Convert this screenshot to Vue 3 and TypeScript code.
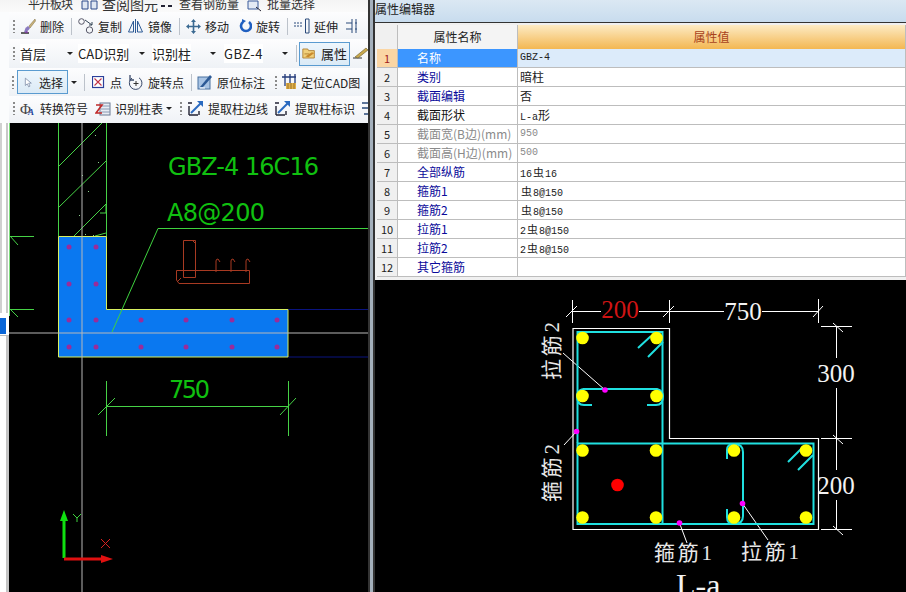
<script setup lang="ts">
interface Row {
  no: number
  name: string
  value: string
  kind: 'blue' | 'black' | 'grey'
}
const rows: Row[] = [
  { no: 1, name: '名称', value: 'GBZ-4', kind: 'blue' },
  { no: 2, name: '类别', value: '暗柱', kind: 'blue' },
  { no: 3, name: '截面编辑', value: '否', kind: 'blue' },
  { no: 4, name: '截面形状', value: 'L-a形', kind: 'black' },
  { no: 5, name: '截面宽(B边)(mm)', value: '950', kind: 'grey' },
  { no: 6, name: '截面高(H边)(mm)', value: '500', kind: 'grey' },
  { no: 7, name: '全部纵筋', value: '16虫16', kind: 'blue' },
  { no: 8, name: '箍筋1', value: '虫8@150', kind: 'blue' },
  { no: 9, name: '箍筋2', value: '虫8@150', kind: 'blue' },
  { no: 10, name: '拉筋1', value: '2虫8@150', kind: 'blue' },
  { no: 11, name: '拉筋2', value: '2虫8@150', kind: 'blue' },
  { no: 12, name: '其它箍筋', value: '', kind: 'blue' },
]
function parts(v: string): string[] {
  return v.split(/([\u4e00-\u9fff]+)/).filter((p) => p.length > 0)
}
function isCjk(p: string): boolean {
  return /[\u4e00-\u9fff]/.test(p)
}
const dotsX = [69, 96]
const dotsY = [247, 284, 320, 347]
const dotsX2 = [141, 186, 232, 277]
const bars: [number, number][] = [
  [582.5, 338], [656.5, 338], [582.5, 396], [656.5, 396],
  [582.5, 450.5], [656, 450.5], [582.5, 517.5], [656, 517.5],
  [734, 450.5], [806, 450.5], [734, 517.5], [806, 517.5],
]
const pins: [number, number][] = [[605, 390], [576.5, 431.5], [679.5, 523], [742.5, 503.5]]
const hatch = [
  'M58 167L102 123', 'M58 208L106 161', 'M74 236L106 204',
  'M100 213L106 213L106 204', 'M95 236L106 233',
]
const specks: [number, number][] = [[95, 135], [98, 162], [82, 175], [88, 191], [79, 215], [85, 234], [93, 235]]
</script>

<template>
  <div class="app">
    <section class="left">
      <div class="strip-top">
        <span class="ghost g1">平开板块</span>
        <svg class="ghost-ic" width="19" height="12" viewBox="0 0 19 12"><path d="M1 1H7V9H1ZM10 1H16V9H10Z" fill="#dfe7f2" stroke="#2d4a8a"/></svg>
        <span class="ghost g2">查阅图元</span>
        <svg class="ghost-ic" width="14" height="12" viewBox="0 0 14 12"><path d="M1 6H5M8 6H12" stroke="#223" stroke-width="2"/></svg>
        <span class="ghost g3">查看钢筋量</span>
        <svg class="ghost-ic" width="15" height="12" viewBox="0 0 15 12"><path d="M1 1H11V9H1Z" fill="#e4eaf4" stroke="#3a5a9a"/><path d="M9 7L14 11" stroke="#223"/></svg>
        <span class="ghost g4">批量选择</span>
      </div>

      <div class="tb tb-a">
        <i class="handle"></i>
        <div class="tool">
          <svg width="16" height="16" viewBox="0 0 16 16"><path d="M1 15H9" stroke="#222" stroke-width="1.4"/><path d="M5 15L8 15L6 9Z" fill="#7a3a9a"/><path d="M4 14C5 11 6 9 8 8L10 10C9 12 7 14 4 14Z" fill="#8a7ac0"/><path d="M9 8L15 1L15.5 3L10 10Z" fill="#c9b27a" stroke="#7b6a3f" stroke-width=".5"/></svg>
          <span>删除</span>
        </div>
        <i class="sep"></i>
        <div class="tool">
          <svg width="16" height="16" viewBox="0 0 16 16" fill="none" stroke="#556"><circle cx="3.5" cy="3.5" r="2.8"/><circle cx="11.5" cy="12" r="3.2"/><path d="M7 2L14 7M14 4V7H11" stroke="#345"/></svg>
          <span>复制</span>
        </div>
        <div class="tool t-mirror">
          <svg width="17" height="16" viewBox="0 0 17 16" fill="none" stroke="#2d5a96"><path d="M8.5 1V15"/><path d="M6.5 3V14H1.5Z"/><path d="M10.5 3V14H15.5Z"/></svg>
          <span>镜像</span>
        </div>
        <i class="sep"></i>
        <div class="tool">
          <svg width="15" height="15" viewBox="0 0 15 15" fill="#3b6a92"><path d="M7.5 0L10 3H8.3V6.7H12V5L15 7.5L12 10V8.3H8.3V12H10L7.5 15L5 12H6.7V8.3H3V10L0 7.5L3 5V6.7H6.7V3H5Z"/></svg>
          <span>移动</span>
        </div>
        <div class="tool t-rot">
          <svg width="13" height="14" viewBox="0 0 13 14" fill="none"><path d="M4 3A5 5 0 1 0 10 3" stroke="#1f5fc0" stroke-width="2.6"/><path d="M3 0V5L7 2Z" fill="#1f5fc0"/></svg>
          <span>旋转</span>
        </div>
        <i class="sep"></i>
        <div class="tool">
          <svg width="16" height="16" viewBox="0 0 16 16" fill="none" stroke="#2a4a7a"><path d="M0 8H9" stroke-dasharray="2 1"/><path d="M0 5H9" stroke-dasharray="2 1"/><path d="M11.5 1V15H15V1Z"/></svg>
          <span>延伸</span>
        </div>
        <div class="tool">
          <svg width="16" height="16" viewBox="0 0 16 16" fill="none" stroke="#2a4a7a"><path d="M0 5H6M0 11H6M6 1V15M9 5H11M9 11H11M10 1V15" /></svg>
        </div>
        <svg class="clip-ic" width="8" height="16" viewBox="0 0 8 16"><path d="M2 2H8V14H2Z" fill="#8a7a4a"/></svg>
      </div>

      <div class="tb tb-b">
        <i class="handle"></i>
        <div class="field f1"><span>首层</span><i class="caret"></i></div>
        <div class="field f2"><span>CAD识别</span><i class="caret"></i></div>
        <div class="field f3"><span>识别柱</span><i class="caret"></i></div>
        <div class="field f4"><span>GBZ-4</span><i class="caret"></i></div>
        <i class="sep s-b"></i>
        <div class="tool active a-prop">
          <svg width="17" height="15" viewBox="0 0 17 15"><path d="M1 2H7L8 4H15V13H1Z" fill="#f0cf7a" stroke="#a9782a"/><path d="M4 11L12 6L15 7L8 12Z" fill="#c98a2c"/><path d="M3 8H9" stroke="#a9782a"/></svg>
          <span>属性</span>
        </div>
        <svg class="clip-ic" width="16" height="15" viewBox="0 0 16 15" fill="none"><path d="M1 12H10" stroke="#333"/><path d="M3 11L14 2L16 4L6 12Z" fill="#c9a94e" stroke="#6a5a2a" stroke-width=".6"/></svg>
      </div>

      <div class="tb tb-c">
        <i class="handle hc"></i>
        <div class="tool active a-sel">
          <svg width="12" height="15" viewBox="0 0 12 15"><path d="M2 1V12L5 9.5L7 14L9 13L7 8.5H11Z" fill="#fff" stroke="#6a7a9a"/></svg>
          <span>选择</span>
        </div>
        <i class="caret c-sel"></i>
        <i class="sep s-sel"></i>
        <div class="tool t-pt">
          <svg width="13" height="13" viewBox="0 0 13 13" fill="#fff"><rect x=".5" y=".5" width="11" height="11" stroke="#2b3f9a" stroke-width="1.2"/><path d="M2.5 2.5L9.5 9.5M9.5 2.5L2.5 9.5" stroke="#c0354a" stroke-width="1.1"/></svg>
          <span>点</span>
        </div>
        <div class="tool t-rp">
          <svg width="16" height="16" viewBox="0 0 16 16" fill="none" stroke="#3a4a6a"><path d="M4 4A6.3 6.3 0 1 0 11 3.8"/><path d="M2 1V6H6" stroke-width="1.3"/><path d="M8 7V12M5.5 9.500H10.500" stroke="#333"/></svg>
          <span>旋转点</span>
        </div>
        <i class="sep s-rp"></i>
        <div class="tool">
          <svg width="16" height="16" viewBox="0 0 16 16"><rect x="1" y="3" width="12" height="12" fill="#a9c4e4" stroke="#48719f"/><path d="M3 13L13 1L15 3L6 13Z" fill="#2d5a96"/><path d="M3 14H8" stroke="#fff"/></svg>
          <span>原位标注</span>
        </div>
        <i class="handle hc2"></i>
        <div class="tool t-loc">
          <svg width="15" height="16" viewBox="0 0 15 16" fill="none"><path d="M0 3H14M3 0V12M8 0V12M13 0V12" stroke="#223a7a" stroke-width="1.3"/><path d="M4 9H14V15H4Z" fill="#e2b04a"/><path d="M6 9V15M9 9V15M12 9V15" stroke="#9a7428"/></svg>
          <span>定位CAD图</span>
        </div>
      </div>

      <div class="tb tb-d">
        <i class="handle"></i>
        <div class="tool t-phi">
          <span class="phi-ic" aria-hidden="true">Φ<b>A</b></span>
          <span>转换符号</span>
        </div>
        <div class="tool t-tab">
          <svg width="16" height="14" viewBox="0 0 16 14"><rect x="5" y="1" width="10" height="12" fill="#e8edf4" stroke="#6a7a94"/><path d="M6 4H15M6 7H15M6 10H15" stroke="#8a9ab4"/><path d="M1 3H7L1 11H7" fill="none" stroke="#c02a2a" stroke-width="1.6"/></svg>
          <span>识别柱表</span>
        </div>
        <i class="caret c-tab"></i>
        <i class="handle hd"></i>
        <div class="tool">
          <svg width="17" height="17" viewBox="0 0 17 17" fill="none"><path d="M2 15V6M2 15H11" stroke="#223" stroke-width="1.4"/><path d="M4 13L15 2" stroke="#2a6ac0" stroke-width="2"/><path d="M10 1H16V7Z" fill="#2a6ac0"/><path d="M1 3H5M12 15V11" stroke="#223" stroke-width="1.4"/></svg>
          <span>提取柱边线</span>
        </div>
        <div class="tool t-last">
          <svg width="17" height="17" viewBox="0 0 17 17" fill="none"><path d="M2 15V6M2 15H11" stroke="#223" stroke-width="1.4"/><path d="M4 13L15 2" stroke="#2a6ac0" stroke-width="2"/><path d="M10 1H16V7Z" fill="#2a6ac0"/><path d="M1 3H5M12 15V11" stroke="#223" stroke-width="1.4"/></svg>
          <span>提取柱标识</span>
        </div>
        <svg class="clip-ic" width="7" height="17" viewBox="0 0 7 17" fill="none"><path d="M1 3H7M1 8H7M3 14H7" stroke="#2a4a7a" stroke-width="1.4"/></svg>
      </div>

      <div class="work">
        <div class="gutter">
          <div class="gut-a"></div>
          <div class="gut-b"></div>
          <div class="gut-c"></div>
        </div>
        <svg class="canvas" viewBox="9 123 359 469" width="359" height="469">
          <path d="M58.500 123V236.500M106.500 123V236.500" stroke="#46d246" fill="none"/>
          <path v-for="h in hatch" :key="h" :d="h" stroke="#46d246" fill="none"/>
          <rect v-for="s in specks" :key="s[0] + '-' + s[1]" :x="s[0]" :y="s[1]" width="1" height="1" fill="#8fd08f"/>

          <path d="M9.500 123V316" stroke="#7fe07f"/>
          <path d="M10 236.500H34M10 309.500H34M10 236L18 245M10 309L18 317" stroke="#46d246" fill="none"/>

          <path d="M288 309.500H368M288 357H368" stroke="#0a1480"/>

          <path d="M58.500 236.500H106.500V309.500H288V357H58.500Z" fill="#0a78f0" stroke="#d8f060"/>

          <path d="M82 123V592" stroke="#b8b8b8"/>
          <path d="M9 333H368" stroke="#b8b8b8"/>

          <g fill="#9a2c9a">
            <template v-for="x in dotsX" :key="x">
              <circle v-for="y in dotsY" :key="y" :cx="x" :cy="y" r="2.500"/>
            </template>
            <template v-for="x in dotsX2" :key="x">
              <circle :cx="x" cy="320" r="2.500"/>
              <circle :cx="x" cy="347" r="2.500"/>
            </template>
          </g>

          <path d="M368 228.500H158L112 332" stroke="#3fd23f" fill="none"/>
          <text class="gtxt" x="168" y="175" textLength="151">GBZ-4 16C16</text>
          <text class="gtxt" x="167" y="221" textLength="98">A8@200</text>

          <g fill="none" stroke="#a83a22">
            <path d="M183.500 240.500H195.500V277.500H183.500Z"/>
            <path d="M176.500 270.500H249.500V283.500H179L176.500 280Z"/>
            <path d="M216 272V261Q216 259 218 259L220 262M231 272V261Q231 259 233 259L235 262M246 272V261Q246 259 248 259L250 262"/>
            <path d="M193 241L195 243M177 282L181 278"/>
          </g>

          <path d="M106.500 381V436M288.500 381V436M106.500 406.500H288.500M98 415L115 398M280 415L296 398" stroke="#46d246" fill="none"/>
          <text class="gtxt" x="169" y="398" textLength="41">750</text>

          <path d="M64 558V516" stroke="#10e010" stroke-width="3"/>
          <path d="M64 510L68 521H60Z" fill="#10e010"/>
          <path d="M64 559H104" stroke="#e01010" stroke-width="3"/>
          <path d="M113 559L101 555V563Z" fill="#e01010"/>
          <path d="M73 514L77 518L81 514M77 518V522" stroke="#3fd23f" fill="none"/>
          <path d="M101 539L110 548M110 539L101 548" stroke="#d82020" fill="none"/>
        </svg>
      </div>
    </section>

    <div class="divider"></div>

    <section class="right">
      <header class="title">属性编辑器</header>
      <div class="grid-wrap">
        <div class="grid">
          <div class="row head">
            <div class="c-no"></div>
            <div class="c-name head-name">属性名称</div>
            <div class="c-val head-val">属性值</div>
          </div>
          <div v-for="r in rows" :key="r.no" class="row" :class="{ sel: r.no === 1 }">
            <div class="c-no">{{ r.no }}</div>
            <div class="c-name" :class="r.kind">{{ r.name }}</div>
            <div class="c-val" :class="{ muted: r.kind === 'grey' }"><template v-for="(p, i) in parts(r.value)" :key="i"><span v-if="isCjk(p)" :class="p === '虫' ? 'bar' : 'cjk'">{{ p }}</span><template v-else>{{ p }}</template></template></div>
          </div>
        </div>
      </div>
      <svg class="drawing" viewBox="375 280 531 312" width="531" height="312">
        <g fill="none" stroke="#fff" stroke-width="1">
          <path d="M573 328.500H669.500V438.500H818.500V529.500H573Z" stroke-width="1.200"/>
          <path d="M572.500 300V323M669.500 300V323M818.500 299V323"/>
          <path d="M572.500 311.500H601M639 311.500H669.500M669.500 311.500H724M762 311.500H818.500"/>
          <path d="M566 317L577 306M663 317L674 306M813 317L823 306"/>
          <path d="M836.500 326.500V358M836.500 388V470M836.500 500V529.500"/>
          <path d="M821 326.500H852M821 438.500H852M821 529.500H852"/>
          <path d="M833 323L843 332M833 435L843 444M833 526L843 535"/>
          <path d="M563 353L605 390M564 445L576.500 431.500M679.500 523L687 543M742.500 503.500L768 540"/>
        </g>

        <g fill="none" stroke="#20e0e0" stroke-width="2">
          <path d="M577.500 443V332H662.500V443"/>
          <path d="M577.500 443.500H813.500V524H577.500Z"/>
          <path d="M662.500 443V524"/>
          <path d="M583 389H657Q663 391 663 396Q663 405 656 405H647"/>
          <path d="M583 389Q577 391 577 396Q577 405 584 405H592"/>
          <path d="M743 452V516"/>
          <path d="M727 459V450Q727 444 734 444Q743 444 743 452"/>
          <path d="M727 509V517Q727 524 734 524Q743 524 743 516"/>
          <path d="M638 348L651 336M648 357L663 342M788 462L803 447M798 470L813 455"/>
        </g>

        <circle v-for="b in bars" :key="b[0] + '-' + b[1]" :cx="b[0]" :cy="b[1]" r="6.300" fill="#ffff00"/>
        <circle cx="617.500" cy="485" r="6.300" fill="#ff0000"/>
        <circle v-for="p in pins" :key="p[0]" :cx="p[0]" :cy="p[1]" r="2.800" fill="#ff00ff"/>

        <text class="dim red" x="620" y="318" text-anchor="middle">200</text>
        <text class="dim" x="743" y="320" text-anchor="middle">750</text>
        <text class="dim" x="836" y="382" text-anchor="middle">300</text>
        <text class="dim" x="836" y="494" text-anchor="middle">200</text>
        <text class="lab" transform="translate(559 380) rotate(-90)" textLength="58">拉筋2</text>
        <text class="lab" transform="translate(559 502) rotate(-90)" textLength="58">箍筋2</text>
        <text class="lab" x="654" y="560" textLength="58">箍筋1</text>
        <text class="lab" x="741" y="559" textLength="58">拉筋1</text>
        <text class="la" x="676" y="596">L-a</text>
      </svg>
    </section>
  </div>
</template>

<style scoped>
.app {
  display: grid;
  grid-template-columns: 368px 7px 531px;
  width: 906px;
  height: 592px;
  overflow: hidden;
  font-family: "Noto Sans CJK SC", "Liberation Sans", sans-serif;
  font-size: 12px;
  color: #222;
  background: #fff;
}
.left {
  display: flex;
  flex-direction: column;
  min-width: 0;
  overflow: hidden;
  background: #fbfcfd;
}
.strip-top {
  height: 12px;
  flex: none;
  display: flex;
  align-items: flex-end;
  overflow: hidden;
  white-space: nowrap;
  background: linear-gradient(#f4f4f4, #fafafa);
}
.ghost {
  flex: none;
  font-size: 12px;
  line-height: 12px;
  margin-bottom: 2px;
  color: #333;
}
.ghost-ic { flex: none; }
.g1 { margin-left: 28px; margin-right: 8px; width: 45px; letter-spacing: -1px; }
.g2 { margin-left: 2px; font-size: 14px; width: 58px; }
.g3 { margin-left: 5px; margin-right: 8px; }
.g4 { margin-left: 5px; }
.tb {
  display: flex;
  align-items: center;
  flex: none;
  white-space: nowrap;
  background: linear-gradient(#fdfdfe, #eff2f6);
  overflow: hidden;
  margin-left: 9px;
  box-sizing: border-box;
}
.tb-a { height: 27px; padding-top: 1px; }
.tb-b { height: 29px; }
.tb-c { height: 28px; }
.tb-d { height: 27px; padding-bottom: 2px; }
.handle {
  flex: none;
  width: 2px;
  height: 13px;
  margin: 0 1px 0 4px;
  background: repeating-linear-gradient(#8a8a8a 0 2px, transparent 2px 4px);
}
.tool {
  display: flex;
  align-items: center;
  flex: none;
  gap: 4px;
  padding: 0 4px;
}
.t-mirror { margin-left: -3px; }
.t-rot { margin-left: 2px; }
.sep {
  flex: none;
  width: 1px;
  height: 17px;
  margin: 0 2px 0 3px;
  background: #bcc2ca;
}
.caret {
  flex: none;
  width: 0;
  height: 0;
  border-left: 3px solid transparent;
  border-right: 3px solid transparent;
  border-top: 3px solid #222;
}
.field {
  display: flex;
  align-items: center;
  justify-content: space-between;
  flex: none;
  height: 24px;
  box-sizing: border-box;
  font-size: 13px;
}
.f1 { width: 57px; padding-left: 4px; margin-right: 4px; }
.f2 { width: 68px; padding-left: 1px; }
.f3 { width: 71px; padding-left: 7px; }
.f4 { width: 72px; padding-left: 8px; letter-spacing: .5px; }
.s-b { margin-left: 8px; margin-right: 2px; }
.field span { background: #fff; }
.active {
  height: 24px;
  box-sizing: border-box;
  border: 1px solid #5a9bd0;
  background: linear-gradient(#eef6fc, #dbeaf6);
}
.a-prop { width: 51px; padding: 0 2px; font-size: 13px; gap: 5px; }
.a-sel { width: 51px; margin-left: 3px; padding-left: 6px; gap: 7px; }
.clip-ic { flex: none; margin-left: 2px; }
.c-sel { margin-left: 3px; }
.s-sel { margin-left: 7px; margin-right: 3px; }
.t-pt { gap: 5px; }
.t-rp { margin-left: -2px; }
.s-rp { margin-right: 1px; }
.hc { margin-left: 3px; margin-right: 0; }
.hc2 { margin-left: 6px; margin-right: 2px; }
.t-loc { padding-left: 3px; }
.phi-ic {
  display: inline-flex;
  align-items: flex-end;
  width: 16px;
  height: 16px;
  font-family: "Liberation Serif", serif;
  font-size: 15px;
  line-height: 16px;
  color: #444;
}
.phi-ic b {
  font-size: 9px;
  line-height: 9px;
  margin-left: -3px;
  color: #1f3f9a;
  font-style: italic;
}
.t-tab { margin-left: -1px; }
.c-tab { margin-left: -1px; }
.hd { margin-left: 8px; margin-right: 1px; }
.t-last { margin-left: -2px; }
.work {
  flex: 1;
  display: flex;
  min-height: 0;
  background: #fff;
}
.gutter {
  width: 9px;
  flex: none;
  display: flex;
  flex-direction: column;
}
.gut-a {
  height: 190px;
  margin-right: 1px;
  border-right: 2px solid #c8c8c8;
  border-left: 2px solid #d0d0d0;
}
.gut-b {
  height: 16px;
  margin-top: 5px;
  width: 6px;
  background: #0a66d8;
}
.gut-c {
  flex: 1;
  margin-top: 1px;
  border-top: 1px solid #bbb;
  border-right: 3px solid #c4c4c4;
}
.canvas, .drawing {
  display: block;
  background: #000;
}
.gtxt {
  font-family: "DejaVu Sans", sans-serif;
  font-size: 24px;
  fill: #10c010;
}
.divider {
  background: linear-gradient(90deg, #333 0 2px, #a4b0bc 2px 5px, #333 5px);
}
.right {
  display: flex;
  flex-direction: column;
  min-width: 0;
}
.title {
  height: 22px;
  flex: none;
  font-size: 12px;
  line-height: 18px;
  color: #222;
  background: linear-gradient(#dbe8f3, #c8dcee);
}
.grid-wrap {
  height: 258px;
  flex: none;
  box-sizing: border-box;
  padding: 2px 0 3px 2px;
  background: #f0f0f0;
  border-top: 1px solid #333;
  overflow: hidden;
}
.grid { background: #fff; }
.row {
  display: grid;
  grid-template-columns: 21px 120px 1fr;
  height: 19px;
  box-sizing: border-box;
  border-bottom: 1px solid #bdbdbd;
  line-height: 18px;
}
.row > div { box-sizing: border-box; border-right: 1px solid #bdbdbd; overflow: hidden; white-space: nowrap; }
.head { height: 24px; border-bottom: none; line-height: 24px; }
.c-no {
  background: #f0f0f0;
  text-align: center;
  font-size: 11px;
}
.c-name { padding-left: 19px; }
.row > .c-val {
  padding-left: 2px;
  font-family: "Liberation Mono", "Noto Sans CJK SC", monospace;
  font-size: 10px;
  white-space: pre;
}
.cjk { font-family: "Noto Sans CJK SC", sans-serif; font-size: 12px; }
.bar { font-family: "Noto Sans CJK SC", sans-serif; font-size: 11px; margin: 0 1px; }
.row > .head-name { padding-left: 0; text-align: center; background: #f4f4f4; font-size: 12px; }
.row > .head-val {
  padding-left: 0;
  text-align: center;
  font-family: "Noto Sans CJK SC", sans-serif;
  font-size: 12px;
  color: #a8421c;
  background: linear-gradient(#fdebc4, #f3b752);
}
.blue { color: #0a0a9a; }
.black { color: #111; }
.grey { color: #8a8a8a; }
.muted { color: #8a8a8a; }
.sel .c-no { background: #fbd6a4; color: #a02020; }
.sel .c-name { background: #3c96ff; color: #fff; }
.sel .c-val { background: #dcebfa; }
.drawing { flex: none; }
.dim {
  font-family: "Liberation Serif", serif;
  font-size: 25px;
  fill: #f2f2f2;
}
.red { fill: #d01414; }
.lab {
  font-family: "Liberation Serif", "Noto Sans CJK SC", serif;
  font-size: 21px;
  fill: #e8e8e8;
}
.la {
  font-family: "Liberation Serif", serif;
  font-size: 32px;
  fill: #f2f2f2;
}
</style>

<style>
html, body { margin: 0; padding: 0; background: #000; overflow: hidden; }
</style>
